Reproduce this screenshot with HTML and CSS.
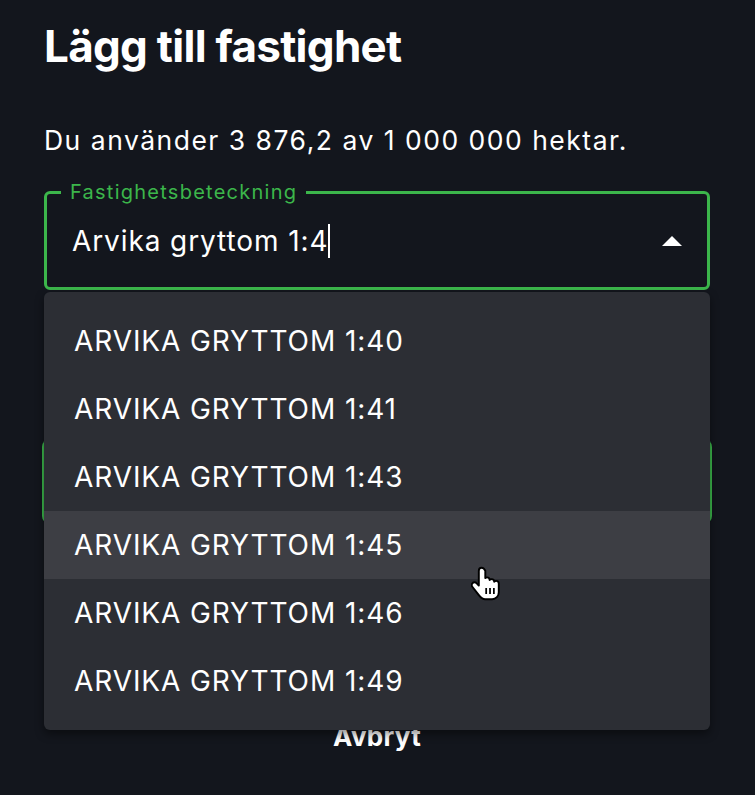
FILE: index.html
```html
<!DOCTYPE html>
<html lang="sv">
<head>
<meta charset="utf-8">
<title>Lägg till fastighet</title>
<link rel="stylesheet" href="styles.css">
</head>
<body>
<main class="page">
  <h1 class="title">Lägg till fastighet</h1>
  <p class="usage">Du använder 3 876,2 av 1 000 000 hektar.</p>
  <div class="field-wrap">
    <fieldset class="field">
      <legend class="field-label">Fastighetsbeteckning</legend>
      <div class="field-row">
        <span class="field-value">Arvika gryttom 1:4</span><span class="caret"></span>
        <svg class="arrow" width="20" height="10" viewBox="0 0 20 10"><path d="M0 10 L10 0 L20 10 Z" fill="#ffffff"/></svg>
      </div>
    </fieldset>
    <ul class="menu">
      <li class="menu-item">ARVIKA GRYTTOM 1:40</li>
      <li class="menu-item">ARVIKA GRYTTOM 1:41</li>
      <li class="menu-item">ARVIKA GRYTTOM 1:43</li>
      <li class="menu-item is-hover">ARVIKA GRYTTOM 1:45</li>
      <li class="menu-item">ARVIKA GRYTTOM 1:46</li>
      <li class="menu-item">ARVIKA GRYTTOM 1:49</li>
    </ul>
  </div>
  <button class="primary" type="button" aria-label="Lägg till"></button>
  <div class="cancel">Avbryt</div>
</main>
<svg class="pointer" width="30" height="35" viewBox="0 0 17 20">
  <path d="M6 1 C5 1 4.4 1.8 4.4 2.7 V11.2 L3.2 9.9 C2.5 9.1 1.3 9.1 0.7 9.9 C0.2 10.5 0.3 11.4 0.8 12 L4.3 16.5 C5.3 17.8 6.5 19 8 19 H12 C14.2 19 15.8 17.2 15.8 15 V10 C15.8 9.1 15.1 8.5 14.3 8.5 C13.8 8.5 13.4 8.7 13.2 9 C13.2 8.1 12.5 7.5 11.7 7.5 C11.2 7.5 10.8 7.7 10.6 8 C10.6 7.1 9.9 6.5 9.1 6.5 C8.7 6.5 8.3 6.7 8.1 6.9 V2.7 C7.6 1.8 7 1 6 1 Z" fill="#ffffff" stroke="#000000" stroke-width="1.1" stroke-linejoin="round"/>
  <path d="M8.6 12.5 V16 M10.8 12.5 V16 M13 12.5 V16" stroke="#000000" stroke-width="1"/>
</svg>
</body>
</html>
```

FILE: styles.css
```css
* { box-sizing: border-box; }

html, body {
  margin: 0;
  padding: 0;
  background: #13161d;
}

body {
  font-family: Inter, "Noto Sans", sans-serif;
  color: #ffffff;
  width: 755px;
  height: 795px;
  overflow: hidden;
  position: relative;
}

.page {
  padding: 20px 45px 0 44px;
}

.title {
  margin: 0;
  font-size: 44px;
  line-height: 52px;
  font-weight: 700;
  letter-spacing: -0.72px;
}

.usage {
  margin: 52px 0 0;
  font-size: 26.5px;
  line-height: 32px;
  font-weight: 400;
  letter-spacing: 1.5px;
}

.field-wrap {
  position: relative;
  margin-top: 24px;
}

.field {
  margin: 0;
  padding: 19px 0 28px 0;
  border: 3px solid #3cb64b;
  border-radius: 6px;
  min-width: 0;
}

.field-label {
  margin-left: 14px;
  padding: 0 9px;
  font-size: 20px;
  line-height: 24px;
  letter-spacing: 1.25px;
  color: #3cb64b;
}

.field-row {
  display: flex;
  align-items: center;
  padding: 0 25px;
}

.field-value {
  font-size: 28px;
  line-height: 36px;
  letter-spacing: 0.9px;
}

.caret {
  display: inline-block;
  width: 2px;
  height: 34px;
  background: #ffffff;
}

.arrow {
  margin-left: auto;
  display: block;
}

.menu {
  position: absolute;
  top: calc(100% + 2px);
  left: 0;
  right: 0;
  margin: 0;
  padding: 15px 0 15px;
  list-style: none;
  background: #2c2e34;
  border-radius: 6px;
  box-shadow: 0 4px 10px rgba(0, 0, 0, 0.45);
  z-index: 2;
}

.menu-item {
  height: 68px;
  display: flex;
  align-items: center;
  padding-left: 30px;
  font-size: 28px;
  letter-spacing: 0.9px;
}

.menu-item.is-hover {
  background: #3d3e44;
}

.primary {
  display: block;
  margin: 149px 0 0 -2px;
  width: 670px;
  height: 85px;
  border: none;
  border-radius: 8px;
  background: #3cb64b;
}

.cancel {
  margin-top: 197px;
  text-align: center;
  font-size: 26px;
  line-height: 32px;
  font-weight: 700;
  letter-spacing: 0.3px;
}

.pointer {
  position: absolute;
  left: 471px;
  top: 566px;
  z-index: 3;
}
```
